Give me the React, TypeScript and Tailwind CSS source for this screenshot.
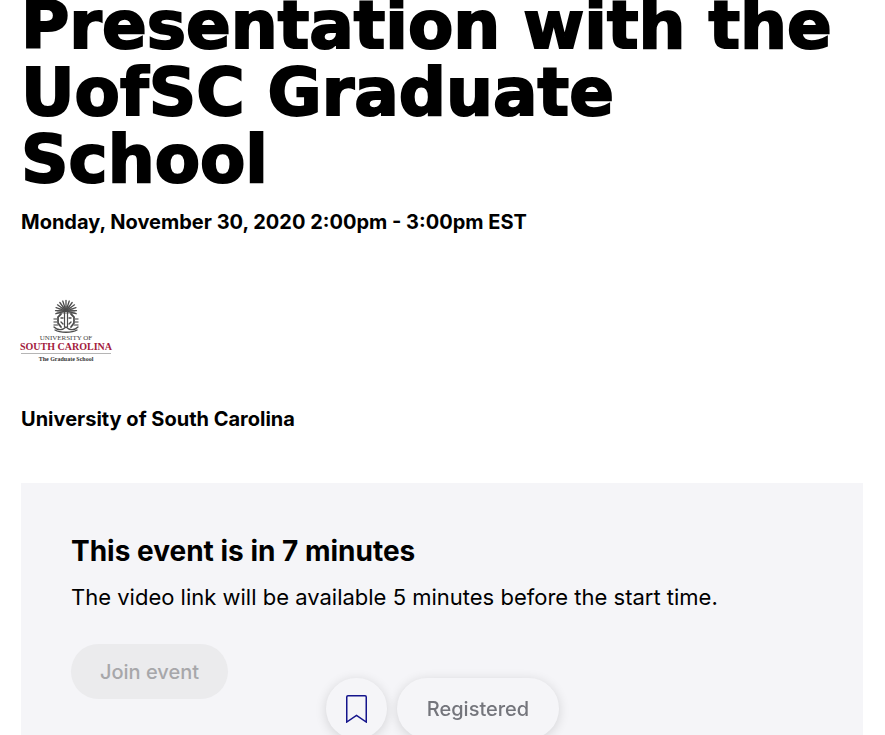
const frondAngles = [-105, -88, -71, -54, -36, -18, 0, 18, 36, 54, 71, 88, 105];

function SchoolLogo() {
  return (
    <svg className="h-[66px] w-[90px] overflow-visible" viewBox="0 0 90 66" role="img" aria-label="University of South Carolina, The Graduate School">
      <g fill="none" stroke="#4c4c4c" strokeLinecap="round">
        <path d="M35 15A10.500 11.500 0 0 1 55 15Z" fill="#b9b9b9" stroke="none" />
        {frondAngles.map((angle) => (
          <path key={angle} d="M45 12V1.500" strokeWidth="1.3" transform={`rotate(${angle} 45 12)`} />
        ))}
        <path d="M43.500 13V28M46.500 13V28" strokeWidth="1.2" />
        <path d="M40 15L37 18V24L40 28M50 15L53 18V24L50 28" strokeWidth="1.8" />
        <path d="M40 19H42M48 19H50M40 23L42 25M50 23L48 25" strokeWidth="1.4" />
        <path d="M33 20L36 20M33 23H36M33 26H37M57 20H54M57 23H54M57 26H53" stroke="#7c7c7c" strokeWidth="1.4" />
        <path d="M33 28C37 32 42 31 45 28C48 31 53 32 57 28M34 31C39 34 51 34 56 31" strokeWidth="1.3" />
      </g>
      <g textAnchor="middle">
        <text x="45" y="41" fill="#444" className="font-['Liberation_Serif',serif] text-[7px]">UNIVERSITY OF</text>
        <text x="45" y="51" fill="#a3203c" className="font-['Liberation_Serif',serif] text-[10px] font-bold">SOUTH CAROLINA</text>
        <text x="45" y="62" fill="#333" className="font-['Liberation_Serif',serif] text-[6px] font-bold">The Graduate School</text>
      </g>
      <path d="M0 54.500H90" stroke="#b5b5b5" />
    </svg>
  );
}

export default function App() {
  return (
    <div className="h-screen overflow-hidden bg-white font-['Inter',sans-serif] text-black">
      <main className="-mt-2 pr-[22px] pl-[21px]">
        <h1 className="font-['DejaVu_Sans',sans-serif] text-[66px] leading-[67px] font-bold [-webkit-text-stroke:2px_black]">
          Presentation with the UofSC Graduate School
        </h1>
        <p className="mt-[15px] text-[20px] leading-[28px] font-bold">
          Monday, November 30, 2020 2:00pm - 3:00pm EST
        </p>
        <div className="mt-[63px]">
          <SchoolLogo />
        </div>
        <p className="mt-[40px] text-[20px] leading-[28px] font-bold">University of South Carolina</p>
        <section className="mt-[50px] bg-[#f5f5f8] px-[50px] pt-[50px] pb-[100px]">
          <h2 className="text-[28px] leading-[36px] font-bold">This event is in 7 minutes</h2>
          <p className="mt-3 text-[22px] leading-[32px]">
            The video link will be available 5 minutes before the start time.
          </p>
          <button
            type="button"
            disabled
            className="mt-[31px] h-[55px] rounded-full bg-[#ebebed] px-[29px] text-[20px] font-medium text-[#a7a7aa]"
          >
            Join event
          </button>
        </section>
      </main>
      <div className="fixed inset-x-0 -bottom-1 flex justify-center gap-[10px]">
        <button
          type="button"
          aria-label="Save event"
          className="flex size-[61px] items-center justify-center rounded-full bg-[#f5f5f8] shadow-[0_2px_12px_rgba(0,0,0,0.14)]"
        >
          <svg className="h-7 w-[21px]" viewBox="0 0 21 28" fill="none" stroke="#14148c" strokeWidth="1.500">
            <path d="M.75 27V2Q.75.75 2 .75H19Q20.250.75 20.250 2V27L10.500 20.500Z" />
          </svg>
        </button>
        <button
          type="button"
          className="h-[61px] rounded-full bg-[#f5f5f8] px-[30px] text-[20px] font-medium text-[#74757c] shadow-[0_2px_12px_rgba(0,0,0,0.14)]"
        >
          Registered
        </button>
      </div>
    </div>
  );
}
